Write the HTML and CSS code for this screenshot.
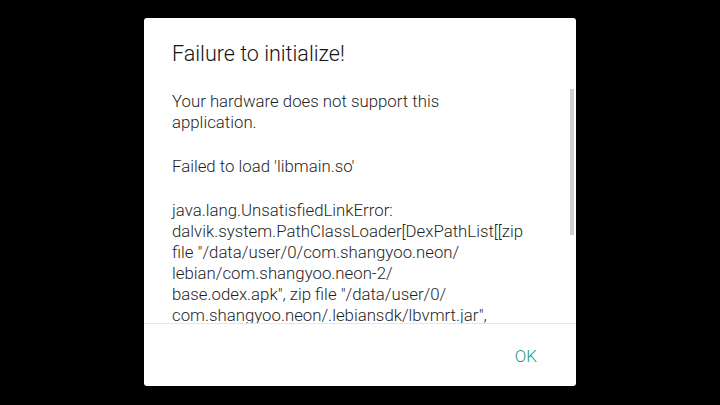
FILE: index.html
```html
<!DOCTYPE html>
<html lang="en">
<head>
    <meta charset="UTF-8">
    <meta name="viewport" content="width=device-width, initial-scale=1.0">
    <title>Failure to initialize!</title>
    <link rel="stylesheet" href="styles.css">
</head>
<body>
    <div class="dialog">
        <div class="dialog-title">Failure to initialize!</div>
        <div class="dialog-body">
            <div class="message">
                <p>Your hardware does not support this<br>application.</p>
                <p>Failed to load 'libmain.so'</p>
                <p>java.lang.UnsatisfiedLinkError:<br>dalvik.system.PathClassLoader[DexPathList[[zip<br>file "/data/user/0/com.shangyoo.neon/<br>lebian/com.shangyoo.neon-2/<br>base.odex.apk", zip file "/data/user/0/<br>com.shangyoo.neon/.lebiansdk/lbvmrt.jar",<br>zip file "/data/user/0/com.shangyoo.neon/<br>lebian/com.shangyoo.neon-2/<br>base.odex.apk"]]] couldn't find "libmain.so"</p>
            </div>
            <div class="scroll-thumb"></div>
        </div>
        <div class="dialog-actions">
            <button class="btn-ok">OK</button>
        </div>
    </div>
</body>
</html>
```

FILE: styles.css
```css
body {
    margin: 0;
    padding: 0;
    background-color: #000000;
    font-family: Roboto, "Liberation Sans", sans-serif;
    height: 405px;
    overflow: hidden;
}
.dialog {
    width: 432px;
    height: 368px;
    margin: 18px auto 0;
    background: #ffffff;
    border-radius: 3px;
    display: flex;
    flex-direction: column;
}
.dialog-title {
    height: 71px;
    box-sizing: border-box;
    padding: 22px 28px 0;
    font-size: 21.5px;
    font-weight: 300;
    line-height: 28px;
    color: #141414;
}
.dialog-body {
    height: 234px;
    position: relative;
    overflow: hidden;
    border-bottom: 1px solid #e6e6e6;
}
.message {
    padding: 2px 28px 0;
    font-size: 16.8px;
    font-weight: 300;
    line-height: 21px;
    color: #1f1f1f;
    white-space: nowrap;
}
.message p {
    margin: 0 0 23px;
}
.scroll-thumb {
    position: absolute;
    right: 2px;
    top: 0;
    width: 4px;
    height: 146px;
    background: #cfcfcf;
}
.dialog-actions {
    flex: 1;
    display: flex;
    justify-content: flex-end;
    align-items: center;
    padding: 0 39px 0 0;
}
.btn-ok {
    border: none;
    background: none;
    padding: 0;
    font-family: inherit;
    font-size: 17px;
    font-weight: 300;
    color: #129e92;
    margin-top: 2px;
}
```
